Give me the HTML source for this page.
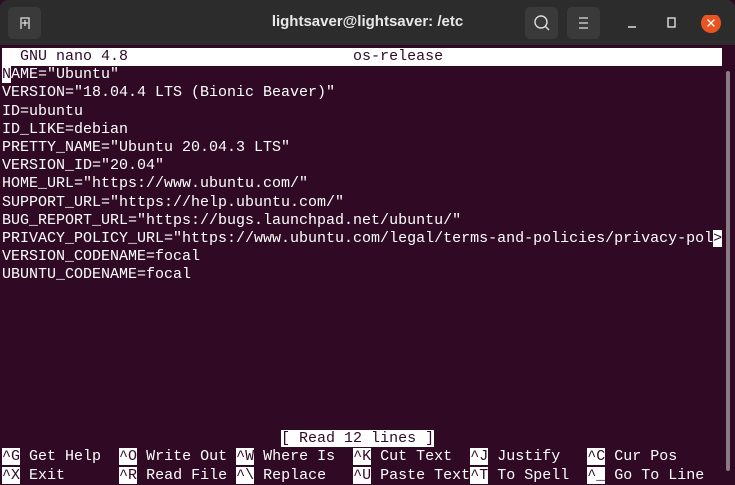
<!DOCTYPE html><html><head><style>
body{margin:0;width:735px;height:475px;overflow:hidden;background:#300a24;font-family:"Liberation Sans",sans-serif;position:relative}
.tb{position:absolute;left:0;top:0;width:735px;height:45px;background:#2c2c2c;border-radius:8px 8px 0 0}
.btn{position:absolute;top:7px;width:33px;height:32px;background:#3a3a3a;border-radius:5px}
.title{position:absolute;top:13px;left:0;width:735px;text-align:center;color:#e8e8e8;font-weight:bold;font-size:15px}
.term{position:absolute;left:2px;top:48px;font-family:"Liberation Mono",monospace;font-size:15px;line-height:18.2px;color:#fff;white-space:pre}
.inv{background:#fff;color:#300a24}
.sb{position:absolute;left:724px;top:47px;width:11px;height:428px;background:#300a24}
.sb div{position:absolute;left:2px;top:24px;width:4px;height:400px;background:#8a7a84;border-radius:2px}
</style></head><body>
<div class="tb">
<div class="btn" style="left:8px"><svg width="33" height="32"><path d="M13 22V11h8v11M17 13v6M14 16h6" stroke="#ddd" stroke-width="1.3" fill="none"/></svg></div>
<div class="title">lightsaver@lightsaver: /etc</div>
<div class="btn" style="left:525px"><svg width="33" height="32"><circle cx="16" cy="15" r="6" stroke="#ddd" stroke-width="1.4" fill="none"/><path d="M20 19l4 4" stroke="#ddd" stroke-width="1.5"/></svg></div>
<div class="btn" style="left:567px"><svg width="33" height="32"><path d="M12 11h9M12 16h9M12 21h9" stroke="#ddd" stroke-width="1.3"/></svg></div>
<svg style="position:absolute;left:622px;top:15px" width="100" height="20"><path d="M6 12h8" stroke="#ddd" stroke-width="1.5"/><rect x="46" y="3" width="7" height="9" stroke="#ddd" stroke-width="1.4" fill="none"/><circle cx="89" cy="8" r="10" fill="#e95420"/><path d="M85.5 4.5l7 7M92.5 4.5l-7 7" stroke="#fff" stroke-width="1.3"/></svg>
</div>
<div class="term"><span class="inv" style="display:inline-block;width:720px">  GNU nano 4.8                         os-release</span>
<span class="inv">N</span>AME="Ubuntu"
VERSION="18.04.4 LTS (Bionic Beaver)"
ID=ubuntu
ID_LIKE=debian
PRETTY_NAME="Ubuntu 20.04.3 LTS"
VERSION_ID="20.04"
HOME_URL="https://www.ubuntu.com/"
SUPPORT_URL="https://help.ubuntu.com/"
BUG_REPORT_URL="https://bugs.launchpad.net/ubuntu/"
PRIVACY_POLICY_URL="https://www.ubuntu.com/legal/terms-and-policies/privacy-pol<span class="inv">&gt;</span>
VERSION_CODENAME=focal
UBUNTU_CODENAME=focal








                               <span class="inv">[ Read 12 lines ]</span>
<span class="inv">^G</span> Get Help  <span class="inv">^O</span> Write Out <span class="inv">^W</span> Where Is  <span class="inv">^K</span> Cut Text  <span class="inv">^J</span> Justify   <span class="inv">^C</span> Cur Pos
<span class="inv">^X</span> Exit      <span class="inv">^R</span> Read File <span class="inv">^\</span> Replace   <span class="inv">^U</span> Paste Text<span class="inv">^T</span> To Spell  <span class="inv">^_</span> Go To Line</div>
<div class="sb"><div></div></div>
</body></html>
